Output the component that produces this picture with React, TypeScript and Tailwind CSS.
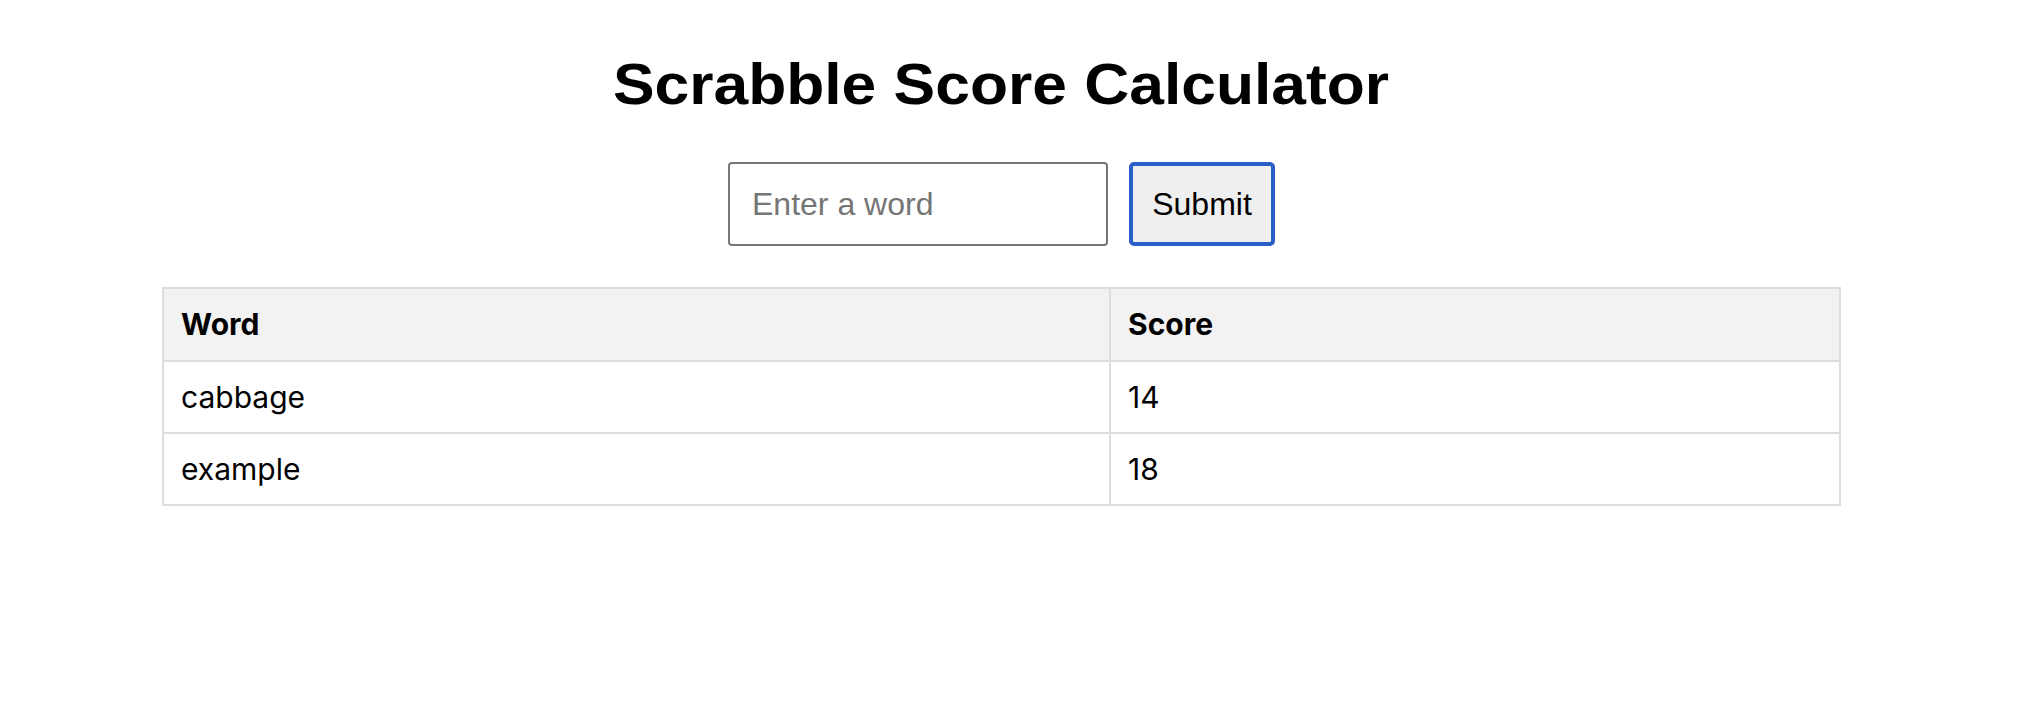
import { useState } from "react";

const rows = [
  { word: "cabbage", score: 14 },
  { word: "example", score: 18 },
];

export default function App() {
  const [word, setWord] = useState("");

  return (
    <div className="min-h-[708px] w-[2003px] bg-white font-['Inter',sans-serif] text-black">
      <h1 className="pt-[50px] text-center font-['Liberation_Sans',Arial,sans-serif] text-[58px] leading-[68px] font-bold">
        <span className="inline-block scale-x-[1.075]">Scrabble Score Calculator</span>
      </h1>
      <div className="mt-[44px] flex justify-center gap-[21px]">
        <input
          value={word}
          onChange={(e) => setWord(e.target.value)}
          placeholder="Enter a word"
          className="h-[84px] w-[380px] rounded-[4px] border-2 border-[#767676] px-[22px] font-['Liberation_Sans',Arial,sans-serif] text-[32px] placeholder:text-[#757575] outline-none"
        />
        <button className="h-[84px] w-[146px] rounded-[5px] border-[4px] border-[#2a5fc8] bg-[#efefef] font-['Liberation_Sans',Arial,sans-serif] text-[32px]">
          Submit
        </button>
      </div>
      <div className="mx-[162px] mt-[41px]">
        <table className="w-full border-collapse text-[30px]">
          <thead>
            <tr className="bg-[#f2f2f2]">
              <th className="w-[947px] h-[73px] border-2 border-[#ddd] px-[17px] text-left font-bold">
                Word
              </th>
              <th className="h-[73px] border-2 border-[#ddd] px-[17px] text-left font-bold">
                Score
              </th>
            </tr>
          </thead>
          <tbody>
            {rows.map((r) => (
              <tr key={r.word}>
                <td className="h-[72px] border-2 border-[#ddd] px-[17px]">{r.word}</td>
                <td className="h-[72px] border-2 border-[#ddd] px-[17px]">{r.score}</td>
              </tr>
            ))}
          </tbody>
        </table>
      </div>
    </div>
  );
}
